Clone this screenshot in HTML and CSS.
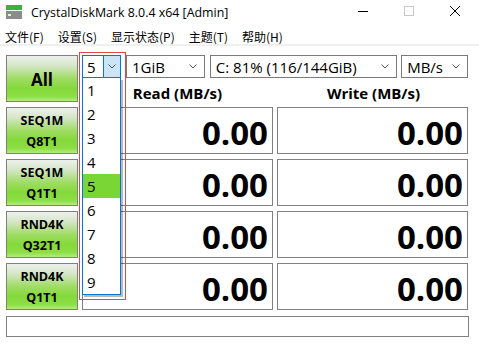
FILE: index.html
```html
<!DOCTYPE html>
<html lang="zh-CN">
<head>
    <meta charset="UTF-8">
    <title>CrystalDiskMark 8.0.4 x64 [Admin]</title>
    <link rel="stylesheet" href="styles.css">
</head>
<body>
    <div class="titlebar">
        <svg class="app-icon" width="16" height="14" viewBox="0 0 16 14">
            <rect x="0" y="0" width="16" height="5" fill="#3cb043"/>
            <rect x="0" y="6" width="16" height="8" fill="#8c8c8c"/>
            <rect x="2" y="9" width="3" height="2" fill="#e8e8e8"/>
        </svg>
        <span class="title">CrystalDiskMark 8.0.4 x64 [Admin]</span>
        <div class="win-controls">
            <svg width="10" height="10" viewBox="0 0 10 10"><line x1="0" y1="5.5" x2="10" y2="5.5" stroke="#000" stroke-width="1"/></svg>
            <svg width="10" height="10" viewBox="0 0 10 10"><rect x="0.5" y="0.5" width="9" height="9" fill="none" stroke="#c8c8c8" stroke-width="1"/></svg>
            <svg width="10" height="10" viewBox="0 0 10 10"><path d="M0 0 L10 10 M10 0 L0 10" stroke="#000" stroke-width="1"/></svg>
        </div>
    </div>

    <div class="menubar">
        <span>文件(F)</span>
        <span>设置(S)</span>
        <span>显示状态(P)</span>
        <span>主题(T)</span>
        <span>帮助(H)</span>
    </div>

    <div class="main">
        <div class="test-btn big">All</div>
        <div class="header">
            <div class="combos">
                <div class="picker">
                    <div class="combo open">
                        <span class="combo-text">5</span>
                        <span class="combo-btn">
                            <svg width="8" height="5" viewBox="0 0 8 5"><polyline points="0.5,0.5 4,4 7.5,0.5" fill="none" stroke="#555" stroke-width="1"/></svg>
                        </span>
                    </div>
                    <ul class="droplist">
                        <li>1</li>
                        <li>2</li>
                        <li>3</li>
                        <li>4</li>
                        <li class="selected">5</li>
                        <li>6</li>
                        <li>7</li>
                        <li>8</li>
                        <li>9</li>
                    </ul>
                </div>
                <div class="combo size">
                    <span class="combo-text">1GiB</span>
                    <svg width="8" height="5" viewBox="0 0 8 5"><polyline points="0.5,0.5 4,4 7.5,0.5" fill="none" stroke="#555" stroke-width="1"/></svg>
                </div>
                <div class="combo drive">
                    <span class="combo-text">C: 81% (116/144GiB)</span>
                    <svg width="8" height="5" viewBox="0 0 8 5"><polyline points="0.5,0.5 4,4 7.5,0.5" fill="none" stroke="#555" stroke-width="1"/></svg>
                </div>
                <div class="combo unit">
                    <span class="combo-text">MB/s</span>
                    <svg width="8" height="5" viewBox="0 0 8 5"><polyline points="0.5,0.5 4,4 7.5,0.5" fill="none" stroke="#555" stroke-width="1"/></svg>
                </div>
            </div>
            <div class="labels">
                <div>Read (MB/s)</div>
                <div>Write (MB/s)</div>
            </div>
        </div>

        <div class="test-btn">SEQ1M<br>Q8T1</div>
        <div class="value">0.00</div>
        <div class="value">0.00</div>

        <div class="test-btn">SEQ1M<br>Q1T1</div>
        <div class="value">0.00</div>
        <div class="value">0.00</div>

        <div class="test-btn">RND4K<br>Q32T1</div>
        <div class="value">0.00</div>
        <div class="value">0.00</div>

        <div class="test-btn">RND4K<br>Q1T1</div>
        <div class="value">0.00</div>
        <div class="value">0.00</div>

        <div class="statusbar"></div>
    </div>
</body>
</html>
```

FILE: styles.css
```css
body {
    margin: 0;
    width: 479px;
    height: 345px;
    background: #fff;
    font-family: 'Open Sans', 'Noto Sans', 'Noto Sans CJK SC', sans-serif;
    color: #000;
    overflow: hidden;
}
.titlebar {
    height: 28px;
    display: flex;
    align-items: center;
    padding-left: 6px;
}
.app-icon {
    margin-right: 9px;
    margin-top: -4px;
}
.title {
    font-size: 12.4px;
    margin-top: -4px;
}
.win-controls {
    margin-left: auto;
    display: flex;
    gap: 36px;
    margin-right: 19px;
    margin-top: -6px;
}
.menubar {
    height: 16px;
    display: flex;
    align-items: center;
    gap: 14px;
    padding-left: 5px;
    font-family: 'Noto Sans CJK SC', sans-serif;
    font-size: 12px;
    border-bottom: 2px solid #f0f0f0;
}
.main {
    display: grid;
    grid-template-columns: 72px 191px 191px;
    grid-template-rows: repeat(5, 47px) 22px;
    column-gap: 4px;
    row-gap: 5px;
    padding: 9px 0 0 6px;
}
.test-btn {
    border: 1px solid #808080;
    background: linear-gradient(#eef1ec 0%, #d4e6c6 22%, #9fdc64 50%, #84d93a 72%, #8ede46 90%, #b4ec84 100%);
    display: flex;
    align-items: center;
    justify-content: center;
    text-align: center;
    font-weight: bold;
    font-size: 12.5px;
    line-height: 21px;
    padding-top: 1px;
    box-sizing: border-box;
}
.test-btn.big {
    font-size: 17px;
    padding-top: 2px;
}
.header {
    grid-column: 2 / 4;
    display: flex;
    flex-direction: column;
}
.combos {
    display: flex;
    height: 23px;
}
.combo {
    border: 1px solid #7a7a7a;
    box-sizing: border-box;
    height: 23px;
    display: flex;
    align-items: center;
    font-size: 15px;
    padding: 0 7px 0 5px;
    background: #fff;
}
.combo .combo-text {
    flex: 1;
}
.combo.size {
    width: 79px;
    margin-left: 5px;
}
.combo.drive {
    width: 188px;
    margin-left: 5px;
}
.combo.unit {
    width: 67px;
    margin-left: 4px;
}
.picker {
    position: relative;
    width: 39px;
    z-index: 2;
}
.picker::after {
    content: '';
    position: absolute;
    left: -3px;
    top: -3px;
    width: 45px;
    height: 246px;
    border: 1px solid #e04848;
}
.combo.open {
    border-color: #0078d7;
    padding: 0;
    width: 39px;
}
.combo.open .combo-text {
    padding-left: 4px;
}
.combo-btn {
    width: 16px;
    height: 21px;
    background: #cce4f7;
    border-left: 1px solid #0078d7;
    display: flex;
    align-items: center;
    justify-content: center;
}
.droplist {
    list-style: none;
    margin: 0;
    padding: 0;
    width: 39px;
    box-sizing: border-box;
    border: 1px solid #0078d7;
    border-top: none;
    background: #fff;
    box-shadow: 2px 2px 0 rgba(0, 0, 0, 0.28);
    font-size: 15px;
}
.droplist li {
    height: 24px;
    line-height: 24px;
    padding-left: 4px;
}
.droplist li.selected {
    background: #7ad634;
}
.labels {
    display: grid;
    grid-template-columns: 191px 191px;
    column-gap: 5px;
    margin-top: 5px;
}
.labels div {
    text-align: center;
    font-weight: bold;
    font-size: 15px;
}
.value {
    border: 1px solid #808080;
    box-sizing: border-box;
    text-align: right;
    font-weight: bold;
    font-size: 33px;
    line-height: 50px;
    padding-right: 4px;
}
.statusbar {
    grid-column: 1 / 4;
    border: 1px solid #808080;
    margin-top: 1px;
    width: 463px;
    box-sizing: border-box;
}
```
